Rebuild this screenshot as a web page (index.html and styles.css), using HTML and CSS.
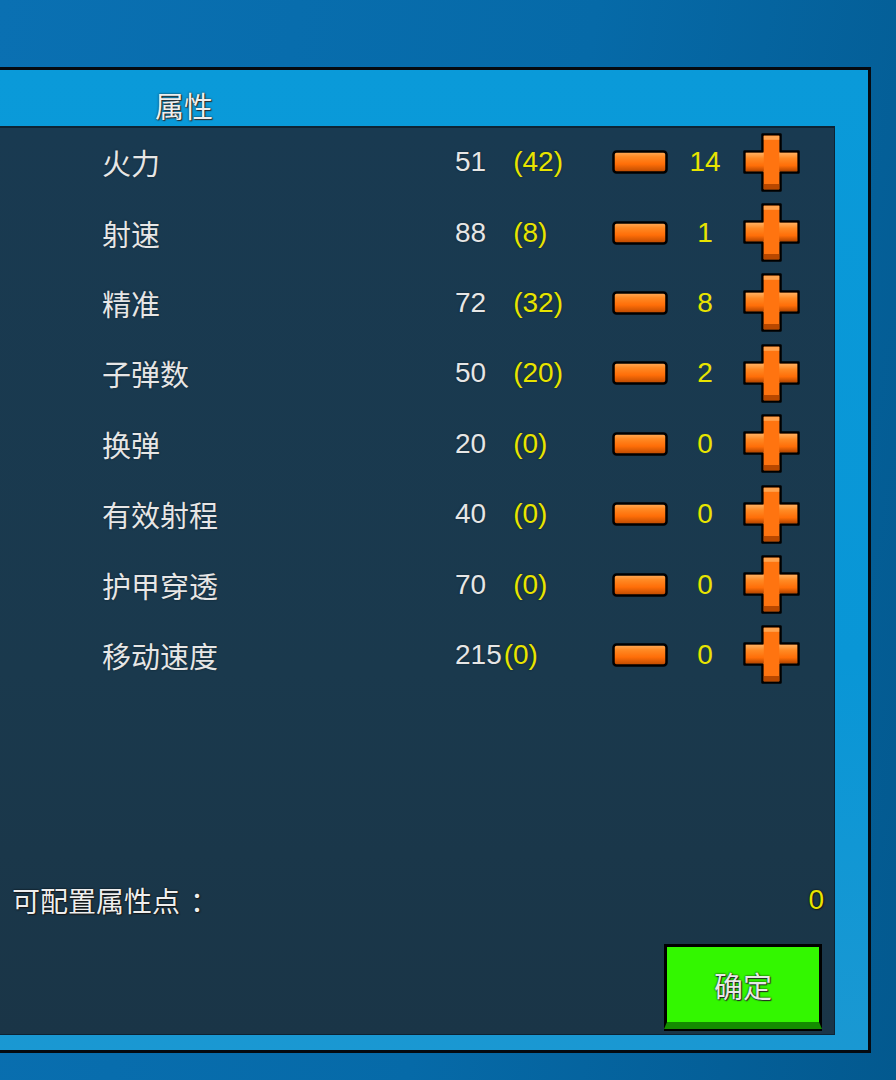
FILE: index.html
```html
<!DOCTYPE html>
<html lang="zh-CN">
<head>
    <meta charset="UTF-8">
    <meta name="viewport" content="width=device-width, initial-scale=1.0">
    <title>属性</title>
    <link rel="stylesheet" href="styles.css">
</head>
<body>
    <svg class="defs" width="0" height="0">
        <defs>
            <linearGradient id="orange" x1="0" y1="0" x2="0" y2="1">
                <stop offset="0" stop-color="#ffb060"/>
                <stop offset="0.25" stop-color="#ff8a24"/>
                <stop offset="0.6" stop-color="#ff6e08"/>
                <stop offset="1" stop-color="#b84800"/>
            </linearGradient>
            <linearGradient id="arm" x1="0" y1="0" x2="0" y2="1">
                <stop offset="0" stop-color="#ffb060"/>
                <stop offset="0.3" stop-color="#ff8a24"/>
                <stop offset="0.7" stop-color="#ff6e08"/>
                <stop offset="1" stop-color="#b84800"/>
            </linearGradient>
        </defs>
    </svg>

    <div class="window">
        <div class="title">属性</div>
        <div class="panel">
            <div class="stats" id="stats"></div>
            <div class="points">
                <span>可配置属性点<span class="colon">：</span></span>
                <span class="points-left">0</span>
            </div>
            <div class="actions">
                <button class="ok-btn">确定</button>
            </div>
        </div>
    </div>

    <script>
        var stats = [
            ['火力', 51, 42, 14],
            ['射速', 88, 8, 1],
            ['精准', 72, 32, 8],
            ['子弹数', 50, 20, 2],
            ['换弹', 20, 0, 0],
            ['有效射程', 40, 0, 0],
            ['护甲穿透', 70, 0, 0],
            ['移动速度', 215, 0, 0]
        ];

        var minusIcon = '<svg width="56" height="24" viewBox="0 0 56 24">' +
            '<rect x="1.5" y="1.5" width="53" height="21" rx="3" fill="url(#orange)" stroke="#000" stroke-width="2.5"/>' +
            '</svg>';

        var plusIcon = '<svg width="57" height="59" viewBox="0 0 57 59">' +
            '<path d="M19.5 1.5h18v17h18v21h-18v18h-18v-18h-18v-21h18z" fill="#ff7410" stroke="#000" stroke-width="2.5" stroke-linejoin="round"/>' +
            '<rect x="2.8" y="19.8" width="51.4" height="18.4" fill="url(#arm)"/>' +
            '<rect x="20.8" y="2.8" width="15.4" height="53.4" fill="#ff7410"/>' +
            '<rect x="20.8" y="2.8" width="15.4" height="4" fill="#ffa450"/>' +
            '<rect x="20.8" y="51" width="15.4" height="5.2" fill="#b84800"/>' +
            '</svg>';

        var list = document.getElementById('stats');
        stats.forEach(function(s) {
            var row = document.createElement('div');
            row.className = 'stat-row';
            row.innerHTML =
                '<span class="stat-name">' + s[0] + '</span>' +
                '<span class="stat-value">' + s[1] + '<span class="stat-bonus">(' + s[2] + ')</span></span>' +
                '<span class="btn-minus">' + minusIcon + '</span>' +
                '<span class="stat-add">' + s[3] + '</span>' +
                '<span class="btn-plus">' + plusIcon + '</span>';
            list.appendChild(row);
        });
    </script>
</body>
</html>
```

FILE: styles.css
```css
body {
    margin: 0;
    width: 896px;
    height: 1080px;
    overflow: hidden;
    font-family: 'Liberation Sans', 'Noto Sans CJK SC', sans-serif;
    background: linear-gradient(100deg, #0a70b2 0%, #066aa8 55%, #03598f 100%);
    color: #e6e6e6;
}
.defs {
    position: absolute;
}
.window {
    box-sizing: border-box;
    margin-top: 67px;
    margin-left: -40px;
    width: 911px;
    height: 986px;
    border: 3px solid #050a10;
    background: linear-gradient(180deg, #0a9ad9 0%, #0996d6 60%, #1a98d2 100%);
    padding: 0 33px 15px 0;
    display: flex;
    flex-direction: column;
}
.title {
    height: 56px;
    line-height: 70px;
    padding-left: 192px;
    font-size: 29px;
    color: #eeeeee;
    text-shadow: 0 0 2px #1a1a1a, 1px 1px 1px #333;
    font-family: 'Noto Sans CJK SC', sans-serif;
}
.panel {
    flex: 1;
    background: linear-gradient(180deg, #193a51 0%, #1a394d 60%, #1a3547 100%);
    border: 1px solid #0d2333;
    border-top-width: 2px;
    display: flex;
    flex-direction: column;
}
.stat-row {
    height: 70.4px;
    display: grid;
    grid-template-columns: 353px 157px 56px 75px 57px;
    align-items: center;
    padding-left: 138px;
    font-size: 28px;
}
.stat-row:first-child {
    margin-top: -1px;
}
.stat-name {
    font-family: 'Noto Sans CJK SC', sans-serif;
    font-size: 29px;
    text-shadow: 0 0 2px #0d1f2a;
}
.stat-value {
    white-space: nowrap;
    text-shadow: 0 0 2px #0d1f2a;
}
.stat-bonus {
    color: #e8e400;
    margin-left: 27px;
}
.stat-row:last-child .stat-bonus {
    margin-left: 2px;
}
.btn-minus,
.btn-plus {
    display: flex;
    align-items: center;
}
.stat-add {
    color: #e8e400;
    text-align: center;
    padding-right: 1px;
}
.points {
    margin-top: 190px;
    height: 40px;
    display: flex;
    justify-content: space-between;
    align-items: center;
    padding: 0 10px 0 48px;
    font-family: 'Noto Sans CJK SC', sans-serif;
    font-size: 28px;
    color: #eeeeee;
    text-shadow: 0 0 2px #000, 1px 1px 1px #222;
}
.colon {
    display: inline-block;
    width: 28px;
    padding-left: 10px;
}
.points-left {
    font-family: 'Liberation Sans', sans-serif;
    font-size: 28px;
    color: #e8e400;
}
.actions {
    flex: 1;
    display: flex;
    justify-content: flex-end;
    align-items: flex-end;
    padding: 0 12px 5px 0;
}
.ok-btn {
    box-sizing: border-box;
    width: 158px;
    height: 85px;
    border: 3px solid #000;
    border-bottom: 7px solid #148c00;
    box-shadow: 0 2px 0 #000;
    background: #33f700;
    color: #e8e8e8;
    font-family: 'Noto Sans CJK SC', sans-serif;
    font-size: 29px;
    text-shadow: 0 0 2px #000, 1px 1px 1px #333;
    padding: 0;
    cursor: pointer;
}
```
